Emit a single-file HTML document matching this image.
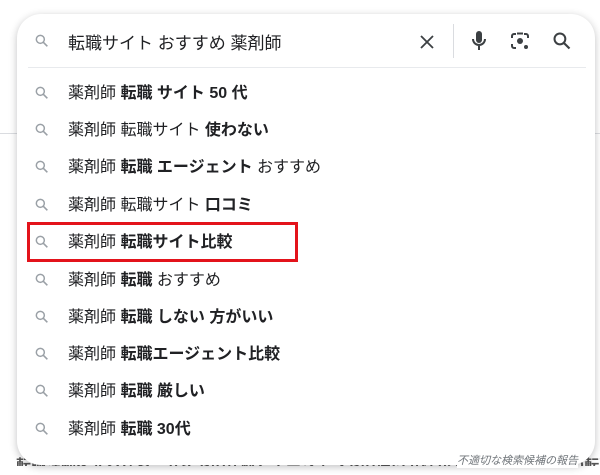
<!DOCTYPE html>
<html><head><meta charset="utf-8"><style>
*{margin:0;padding:0;box-sizing:border-box}
body{width:600px;height:475px;background:#fff;position:relative;overflow:hidden;font-family:"Liberation Sans","Noto Sans CJK JP",sans-serif;color:#202124}
.bgline{position:absolute;left:0;right:0;top:133px;height:1px;background:#dadce0}
.bgclip{position:absolute;left:0;top:457px;width:600px;height:9px;overflow:hidden}
.bgtext{position:absolute;left:16px;top:0;font-size:15px;line-height:18px;color:#555;white-space:nowrap;font-weight:bold}
.box{position:absolute;left:17px;top:14px;width:578px;height:451px;background:#fff;border-radius:24px;box-shadow:0 2px 8px rgba(32,33,36,.28)}
.q{position:absolute;left:68px;top:29px;font-size:17px;color:#202124;white-space:nowrap}
.sep{position:absolute;left:28px;right:14px;top:67px;height:1px;background:#e8eaed}
.vsep{position:absolute;left:453px;top:24px;width:1px;height:34px;background:#dadce0}
.row{position:absolute;left:0;height:37px;width:100%}
.row svg{position:absolute;left:34px;top:11px}
.row span{position:absolute;left:68px;top:5px;font-size:16px;white-space:nowrap}
b{font-weight:bold}
.red{position:absolute;left:27px;top:222px;width:271px;height:40px;border:3px solid #e3131b}
.rep{position:absolute;right:22px;top:452px;font-size:11px;font-style:italic;color:#70757a;background:#fff}
</style></head><body>
<div class="bgline"></div>
<div class="bgclip"><div class="bgtext">転職活動をするなら、サイトの比較とエージェントの使い分けが大切です。薬剤師の転職</div></div>
<div class="box"></div>
<svg style="position:absolute;left:34px;top:33px" width="16" height="16" viewBox="0 0 24 24"><circle cx="9.5" cy="9.5" r="6" fill="none" stroke="#9aa0a6" stroke-width="2.2"/><path d="M14 14l6 6" stroke="#9aa0a6" stroke-width="2.4"/></svg>
<div class="q">転職サイト おすすめ 薬剤師</div>
<svg style="position:absolute;left:418px;top:33px" width="18" height="18" viewBox="0 0 24 24"><path d="M4 4L20 20M20 4L4 20" stroke="#3c4043" stroke-width="2.4"/></svg>
<div class="vsep"></div>
<svg style="position:absolute;left:469px;top:29px" width="20" height="24" viewBox="0 0 20 24"><rect x="7" y="2" width="6" height="12" rx="3" fill="#3c4043"/><path d="M4 10a6 6 0 0 0 12 0M10 16v5" stroke="#3c4043" stroke-width="2" fill="none"/></svg>
<svg style="position:absolute;left:510px;top:31px" width="20" height="20" viewBox="0 0 20 20"><path d="M2 7V5a2 2 0 0 1 2-2h2M14 3h2a2 2 0 0 1 2 2v2M2 13v2a2 2 0 0 0 2 2h2" stroke="#3c4043" stroke-width="2" fill="none"/><circle cx="10" cy="10" r="3" fill="#3c4043"/><circle cx="16" cy="16" r="2" fill="#3c4043"/><rect x="7" y="1.5" width="6" height="2" fill="#3c4043"/></svg>
<svg style="position:absolute;left:552px;top:31px" width="20" height="20" viewBox="0 0 24 24"><circle cx="9.5" cy="9.5" r="6.5" fill="none" stroke="#3c4043" stroke-width="2.4"/><path d="M14.5 14.5l6.5 6.5" stroke="#3c4043" stroke-width="2.6"/></svg>
<div class="sep"></div>

<div class="row" style="top:74px"><svg width="16" height="16" viewBox="0 0 24 24"><circle cx="9.5" cy="9.5" r="6" fill="none" stroke="#9aa0a6" stroke-width="2.2"/><path d="M14 14l6 6" stroke="#9aa0a6" stroke-width="2.4"/></svg><span>薬剤師 <b>転職 サイト 50 代</b></span></div>
<div class="row" style="top:111px"><svg width="16" height="16" viewBox="0 0 24 24"><circle cx="9.5" cy="9.5" r="6" fill="none" stroke="#9aa0a6" stroke-width="2.2"/><path d="M14 14l6 6" stroke="#9aa0a6" stroke-width="2.4"/></svg><span>薬剤師 転職サイト <b>使わない</b></span></div>
<div class="row" style="top:148px"><svg width="16" height="16" viewBox="0 0 24 24"><circle cx="9.5" cy="9.5" r="6" fill="none" stroke="#9aa0a6" stroke-width="2.2"/><path d="M14 14l6 6" stroke="#9aa0a6" stroke-width="2.4"/></svg><span>薬剤師 <b>転職 エージェント</b> おすすめ</span></div>
<div class="row" style="top:186px"><svg width="16" height="16" viewBox="0 0 24 24"><circle cx="9.5" cy="9.5" r="6" fill="none" stroke="#9aa0a6" stroke-width="2.2"/><path d="M14 14l6 6" stroke="#9aa0a6" stroke-width="2.4"/></svg><span>薬剤師 転職サイト <b>口コミ</b></span></div>
<div class="row" style="top:223px"><svg width="16" height="16" viewBox="0 0 24 24"><circle cx="9.5" cy="9.5" r="6" fill="none" stroke="#9aa0a6" stroke-width="2.2"/><path d="M14 14l6 6" stroke="#9aa0a6" stroke-width="2.4"/></svg><span>薬剤師 <b>転職サイト比較</b></span></div>
<div class="row" style="top:261px"><svg width="16" height="16" viewBox="0 0 24 24"><circle cx="9.5" cy="9.5" r="6" fill="none" stroke="#9aa0a6" stroke-width="2.2"/><path d="M14 14l6 6" stroke="#9aa0a6" stroke-width="2.4"/></svg><span>薬剤師 <b>転職</b> おすすめ</span></div>
<div class="row" style="top:298px"><svg width="16" height="16" viewBox="0 0 24 24"><circle cx="9.5" cy="9.5" r="6" fill="none" stroke="#9aa0a6" stroke-width="2.2"/><path d="M14 14l6 6" stroke="#9aa0a6" stroke-width="2.4"/></svg><span>薬剤師 <b>転職 しない 方がいい</b></span></div>
<div class="row" style="top:335px"><svg width="16" height="16" viewBox="0 0 24 24"><circle cx="9.5" cy="9.5" r="6" fill="none" stroke="#9aa0a6" stroke-width="2.2"/><path d="M14 14l6 6" stroke="#9aa0a6" stroke-width="2.4"/></svg><span>薬剤師 <b>転職エージェント比較</b></span></div>
<div class="row" style="top:372px"><svg width="16" height="16" viewBox="0 0 24 24"><circle cx="9.5" cy="9.5" r="6" fill="none" stroke="#9aa0a6" stroke-width="2.2"/><path d="M14 14l6 6" stroke="#9aa0a6" stroke-width="2.4"/></svg><span>薬剤師 <b>転職 厳しい</b></span></div>
<div class="row" style="top:410px"><svg width="16" height="16" viewBox="0 0 24 24"><circle cx="9.5" cy="9.5" r="6" fill="none" stroke="#9aa0a6" stroke-width="2.2"/><path d="M14 14l6 6" stroke="#9aa0a6" stroke-width="2.4"/></svg><span>薬剤師 <b>転職 30代</b></span></div>
<div class="red"></div>
<div class="rep">不適切な検索候補の報告</div>
</body></html>
